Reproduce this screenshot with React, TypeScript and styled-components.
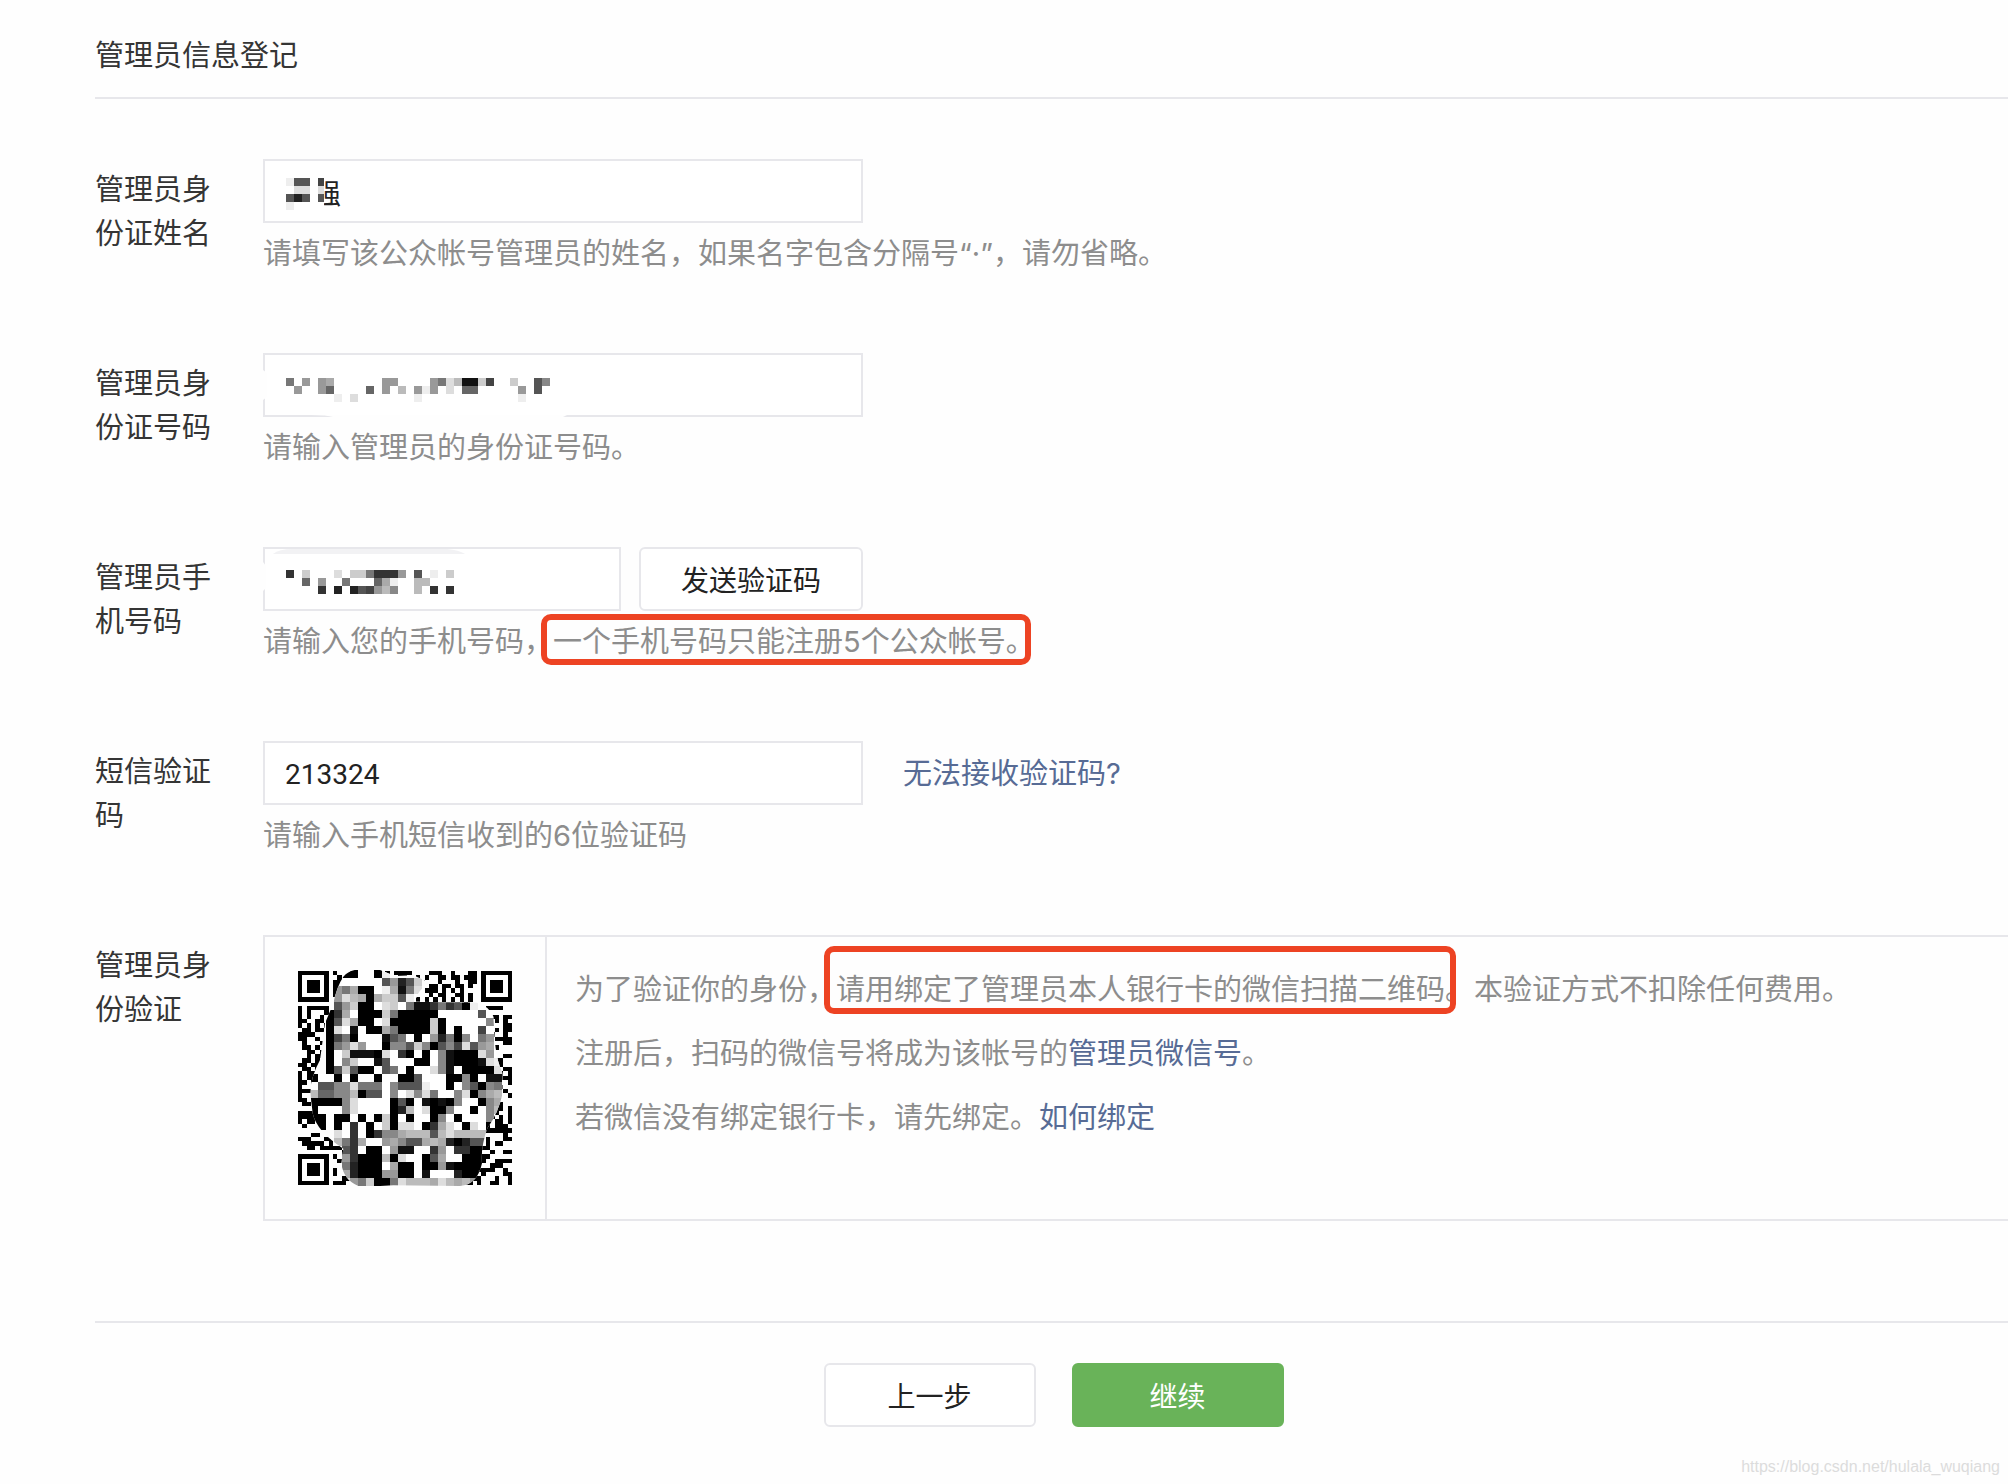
import React from 'react';
import styled, { createGlobalStyle } from 'styled-components';

const LINE = '#e7e7eb';
const MARK = '#ed4323';
const FONT = "Inter, 'Noto Sans CJK SC', sans-serif";

const GlobalStyle = createGlobalStyle`
  *, *::before, *::after { box-sizing: border-box; }
  body { margin: 0; background: #fefefe; }
`;

const Page = styled.div`
  position: relative;
  min-height: 100vh;
  padding: 34px 0 56px 95px;
  overflow-x: hidden;
  font-family: ${FONT};
  font-size: 29px;
  line-height: 44px;
  color: #353535;
`;

const Title = styled.h1`
  margin: 0;
  padding-bottom: 19px;
  border-bottom: 2px solid ${LINE};
  font-size: 29px;
  font-weight: 400;
  line-height: 44px;
`;

const Form = styled.form`
  display: flex;
  flex-direction: column;
  gap: 77px;
  padding-top: 60px;
`;

const Row = styled.div`
  display: grid;
  grid-template-columns: 120px minmax(0, 1fr);
  column-gap: 48px;
`;

const labelStyle = `
  display: block;
  padding-top: 9px;
`;

const Label = styled.label`${labelStyle}`;
const Caption = styled.div`${labelStyle}`;

const Controls = styled.div`
  display: flex;
  align-items: center;
`;

const Field = styled.div<{ $width: number }>`
  position: relative;
  width: ${(p) => p.$width}px;
  height: 64px;
`;

const Input = styled.input`
  display: block;
  width: 100%;
  height: 100%;
  padding: 2px 20px 0;
  border: 2px solid ${LINE};
  border-radius: 0;
  outline: none;
  background: #fff;
  color: #222;
  font-family: Roboto, 'Noto Sans CJK SC', sans-serif;
  font-size: 28px;
`;

const Overlay = styled.svg`
  position: absolute;
  top: 0;
  left: 0;
  width: 100%;
  height: 100%;
  pointer-events: none;
`;

const Hint = styled.p`
  margin: 9px 0 0;
  color: #8d8d8d;
`;

const Link = styled.a`
  color: #576b95;
  text-decoration: none;
`;

const SideLink = styled(Link)`
  margin-left: 40px;
  padding-top: 2px;
`;

const Button = styled.button<{ $width: number; $primary?: boolean }>`
  width: ${(p) => p.$width}px;
  height: 64px;
  padding: 0;
  border: 2px solid ${(p) => (p.$primary ? '#69b359' : LINE)};
  border-radius: 6px;
  background: ${(p) => (p.$primary ? '#69b359' : '#fff')};
  color: ${(p) => (p.$primary ? '#fff' : '#222')};
  font-family: ${FONT};
  font-size: 28px;
  cursor: pointer;
`;

const SendButton = styled(Button)`
  margin-left: 18px;
`;

const Marked = styled.span<{ $over: number; $under: number; $trim: number }>`
  position: relative;
  &::after {
    content: '';
    position: absolute;
    top: -${(p) => p.$over}px;
    bottom: -${(p) => p.$under}px;
    left: -12px;
    right: ${(p) => p.$trim}px;
    border: 6px solid ${MARK};
    border-radius: 10px;
    pointer-events: none;
  }
`;

const Panel = styled.div`
  display: flex;
  border: 2px solid ${LINE};
  border-right: 0;
`;

const QrCell = styled.div`
  display: flex;
  flex: none;
  align-items: center;
  justify-content: center;
  width: 282px;
  height: 282px;
  border-right: 2px solid ${LINE};
`;

const PanelText = styled.div`
  display: flex;
  flex-direction: column;
  gap: 20px;
  padding: 31px 0 0 28px;
  color: #8d8d8d;
`;

const Paragraph = styled.p`
  margin: 0;
`;

const Actions = styled.div`
  display: flex;
  justify-content: center;
  gap: 36px;
  margin-top: 23px;
  padding: 40px 0 0 4px;
  border-top: 2px solid ${LINE};
`;

const Watermark = styled.div`
  position: absolute;
  right: 8px;
  bottom: 7px;
  color: #dcdcdc;
  font-family: 'Liberation Sans', sans-serif;
  font-size: 16px;
  line-height: 20px;
`;

/* Grey levels are hex digits, "." leaves a cell empty. */
function Cells({ rows, x, y, size }: { rows: string[]; x: number; y: number; size: number }) {
  return (
    <g shapeRendering="crispEdges">
      {rows.flatMap((row, r) =>
        [...row].map((c, i) => {
          if (c === '.') return null;
          const v = parseInt(c, 16) * 17;
          return (
            <rect key={`${r}-${i}`} x={x + i * size} y={y + r * size} width={size} height={size} fill={`rgb(${v},${v},${v})`} />
          );
        })
      )}
    </g>
  );
}

const NAME_CELLS = ['e55.4', '.dd.d', '525.5', 'e....'];
const ID_CELLS = [
  '7.9.9a.....f99...f97db11c4.fc..58.',
  '.9..96....6.9.b.9e9.d.66...f.9.5..',
  '......e.d.....f.e............e...f',
];
const PHONE_CELLS = [
  '3.c.f.d.cc73339.5.e.c.',
  '..6.9..7..f6ae..bb.f.f',
  '....3.2.2549b8..b.3.3.',
];

/* Left edge of the code, modules 0-8, from row 8 down. */
const QR_LEFT = [
  '#.#####..', '#.#...#.#', '#.#..#.##', '##..##.##', '#.#.#.##.', '.##.##.##', '####..###', '##..#..##',
  '.#...#.##', '.##.#.###', '..##.####', '..#.####.', '.##.#.###', '##.##.###', '.##.#.###', '#.##..###',
];
/* Top edge, modules 26-41, from row 0 down. */
const QR_TOP = [
  '....###..#...##.', '.#.#..##.##.###.', '..#...#...#..##.', '....##.##.##.#..',
  '...###.#.#.#....', '....#.##..##.#..', '.#.#.#.#.#.#.#.#', '....##....#.#...',
];
/* Right edge, modules 42-48, from row 8 down. */
const QR_RIGHT = [
  '.####..', '.......', '..##.##', '...#.#.', '.....##', '...#.##', '.##..#.', '...####', '.....##', '..##...',
  '.......', '..#..##', '...##..', '..###..', '.....##', '...##.#',
];

const N = 49;
const STEP = 642 / N;

function inFinder(r: number, c: number) {
  return (r < 8 && (c < 8 || c > 40)) || (r > 40 && c < 8);
}

function moduleOn(r: number, c: number) {
  if (inFinder(r, c)) return false;
  if (r >= 8 && r < 24 && c < 9) return QR_LEFT[r - 8][c] === '#';
  if (r < 8 && c >= 26 && c < 42) return QR_TOP[r][c - 26] === '#';
  if (r >= 8 && r < 24 && c >= 42) return QR_RIGHT[r - 8][c - 42] === '#';
  if (c === 6) return r % 2 === 0;
  const h = Math.sin(r * 12.9898 + c * 78.233) * 43758.5453;
  return h - Math.floor(h) < 0.52;
}

const QR_BLUR = [
  '....00ff0e....fffff.....',
  '....fffff5925c..........',
  '...97a00fea17d..........',
  '...9dba0acc5ef..........',
  '...59c00fdcf71137350e...',
  '..03af000c700000fffff5f.',
  '..05da00fd00000c0fffff8.',
  '..0df1f00a70000c0f0ff4f.',
  '..0470fff157f0f92708f79.',
  '..079d9ff0885c80584d59a.',
  '..0fc1110df30f0f81000d9f',
  '..0f8cff15fff00f810001de',
  '..05c500f57f0ffd81f0000d',
  '0ff0f0ff0ff005fff0080f11',
  'f5588d777f8555eff0f85087',
  'b6688b055f8fd8d7ff8d08ab',
  '00008dffff050f10108ff08a',
  '0fff8dffff02bfd008ff0f8b',
  '00f00f0f0c0f0ff08f0fff8.',
  '00f0f3f0fc0ddf03adf0df0.',
  '...df3f0388abbb5bdbbbb3.',
  '...b73aff9a855aba202557.',
  '....53f00f911ff39f3300..',
  '....93000b0dff05aff0000.',
  '....72000fa00f009100000.',
  '....a20009900f1fff2001..',
  '....d97c007dbbbadbab9d..',
];

function Finder({ x, y }: { x: number; y: number }) {
  return (
    <g>
      <rect x={x} y={y} width={STEP * 7} height={STEP * 7} fill="#000" />
      <rect x={x + STEP} y={y + STEP} width={STEP * 5} height={STEP * 5} fill="#fff" />
      <rect x={x + STEP * 2} y={y + STEP * 2} width={STEP * 3} height={STEP * 3} fill="#000" />
    </g>
  );
}

const BLOB =
  'M190 80 Q205 62 230 59 L300 60 Q325 70 345 78 L400 76 L450 98 Q412 118 405 155 L590 158 Q628 168 640 200 L645 280 Q652 340 668 370 L668 430 Q655 490 622 535 Q602 590 606 640 Q592 705 540 708 L340 706 L300 708 L235 708 Q190 690 184 640 L190 596 Q110 545 98 490 L91 430 Q92 380 120 330 L135 220 L160 160 Q170 110 190 80 Z';

function QrCode() {
  const modules: React.ReactNode[] = [];
  for (let r = 0; r < N; r++) {
    for (let c = 0; c < N; c++) {
      if (moduleOn(r, c)) {
        modules.push(<rect key={`${r}-${c}`} x={54 + c * STEP} y={63 + r * STEP} width={STEP} height={STEP} />);
      }
    }
  }
  return (
    <svg width="214" height="216" viewBox="54 60 642 648" role="img" aria-label="二维码">
      <defs>
        <clipPath id="blob">
          <path d={BLOB} />
        </clipPath>
      </defs>
      <g shapeRendering="crispEdges">
        {modules}
        <Finder x={54} y={63} />
        <Finder x={54 + STEP * 42} y={63} />
        <Finder x={54} y={63 + STEP * 42} />
      </g>
      <g clipPath="url(#blob)">
        <rect x="54" y="59" width="642" height="649" fill="#fcfcfc" />
        <Cells rows={QR_BLUR} x={90} y={59} size={24} />
      </g>
    </svg>
  );
}

export default function App() {
  return (
    <Page>
      <GlobalStyle />
      <Title>管理员信息登记</Title>
      <Form onSubmit={(e) => e.preventDefault()}>
        <Row>
          <Label htmlFor="admin-name">管理员身份证姓名</Label>
          <div>
            <Controls>
              <Field $width={600}>
                <Input id="admin-name" type="text" defaultValue="　强" />
                <Overlay>
                  <rect x="20" y="14" width="41" height="36" fill="#fff" />
                  <svg width="61" height="64">
                    <Cells rows={NAME_CELLS} x={23} y={19} size={8} />
                  </svg>
                </Overlay>
              </Field>
            </Controls>
            <Hint>请填写该公众帐号管理员的姓名，如果名字包含分隔号“·”，请勿省略。</Hint>
          </div>
        </Row>

        <Row>
          <Label htmlFor="admin-id">管理员身份证号码</Label>
          <div>
            <Controls>
              <Field $width={600}>
                <Input id="admin-id" type="text" />
                <Overlay>
                  <path d="M0 17 L4 20 V44 L0 47 Z M70 64 Q64 62 48 62 H304 L300 64 Z" fill="#fefefe" />
                  <Cells rows={ID_CELLS} x={23} y={25} size={8} />
                </Overlay>
              </Field>
            </Controls>
            <Hint>请输入管理员的身份证号码。</Hint>
          </div>
        </Row>

        <Row>
          <Label htmlFor="admin-phone">管理员手机号码</Label>
          <div>
            <Controls>
              <Field $width={358}>
                <Input id="admin-phone" type="tel" />
                <Overlay>
                  <path d="M10 7 Q16 2 30 2 H184 Q196 3 202 7 Z" fill="#f2f2f4" />
                  <path d="M0 15 L3 19 V41 L0 44 Z" fill="#fefefe" />
                  <Cells rows={PHONE_CELLS} x={23} y={23} size={8} />
                </Overlay>
              </Field>
              <SendButton type="button" $width={224}>发送验证码</SendButton>
            </Controls>
            <Hint>
              请输入您的手机号码，
              <Marked $over={10} $under={6} $trim={4}>一个手机号码只能注册5个公众帐号。</Marked>
            </Hint>
          </div>
        </Row>

        <Row>
          <Label htmlFor="sms-code">短信验证码</Label>
          <div>
            <Controls>
              <Field $width={600}>
                <Input id="sms-code" type="text" inputMode="numeric" defaultValue="213324" />
              </Field>
              <SideLink href="#">无法接收验证码?</SideLink>
            </Controls>
            <Hint>请输入手机短信收到的6位验证码</Hint>
          </div>
        </Row>

        <Row>
          <Caption>管理员身份验证</Caption>
          <Panel>
            <QrCell>
              <QrCode />
            </QrCell>
            <PanelText>
              <Paragraph>
                为了验证你的身份，
                <Marked $over={26} $under={7} $trim={18}>请用绑定了管理员本人银行卡的微信扫描二维码。</Marked>
                本验证方式不扣除任何费用。
              </Paragraph>
              <Paragraph>
                注册后，扫码的微信号将成为该帐号的<Link href="#">管理员微信号</Link>。
              </Paragraph>
              <Paragraph>
                若微信没有绑定银行卡，请先绑定。<Link href="#">如何绑定</Link>
              </Paragraph>
            </PanelText>
          </Panel>
        </Row>

        <Actions>
          <Button type="button" $width={212}>上一步</Button>
          <Button type="submit" $width={212} $primary>继续</Button>
        </Actions>
      </Form>
      <Watermark>https://blog.csdn.net/hulala_wuqiang</Watermark>
    </Page>
  );
}
